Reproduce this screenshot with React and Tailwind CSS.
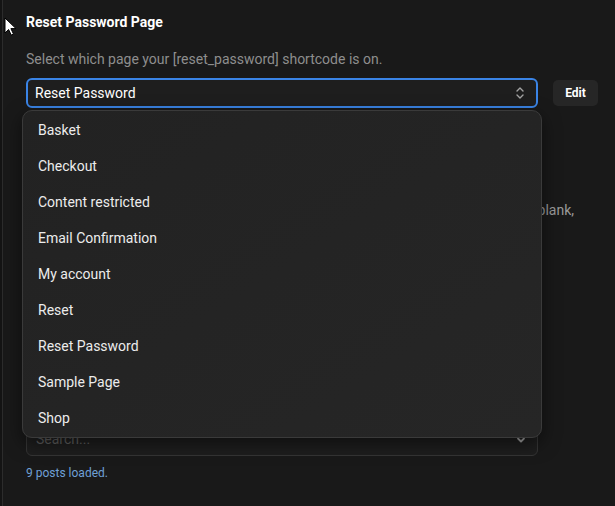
import React from "react";

const pages = [
  "Basket",
  "Checkout",
  "Content restricted",
  "Email Confirmation",
  "My account",
  "Reset",
  "Reset Password",
  "Sample Page",
  "Shop",
];

const font = { fontFamily: '"Segoe UI", Roboto, "Noto Sans", sans-serif' };

// up/down caret used by the native-looking select
const UpDown = () => (
  <svg width="10" height="14" viewBox="0 0 10 14" fill="none" stroke="#a3a3a3" strokeWidth="1.4" strokeLinecap="round" strokeLinejoin="round">
    <path d="M2 5l3-3 3 3" />
    <path d="M2 9l3 3 3-3" />
  </svg>
);

const ChevronDown = () => (
  <svg width="10" height="8" viewBox="0 0 10 8" fill="none" stroke="#a3a3a3" strokeWidth="1.8" strokeLinecap="round" strokeLinejoin="round">
    <path d="M2 2.5l3 3 3-3" />
  </svg>
);

const Pointer = () => (
  <svg width="12" height="19" viewBox="0 0 12 19">
    <path d="M1 1v15l3.6-3.5 2.6 5.6 2.3-1-2.6-5.5H12z" fill="#fff" stroke="#000" strokeWidth="1" strokeLinejoin="round" />
  </svg>
);

const App = () => {
  return (
    <div className="relative flex w-[615px] h-[506px] overflow-hidden bg-[#141414]" style={font}>
      <div className="w-[2px] shrink-0" />
      <div className="flex-1 border-l border-[#2c2c2c] bg-[#191919] pl-[23px] pr-[17px] pt-[12px]">
        <h2 className="text-[14px] leading-[20px] font-bold text-white">Reset Password Page</h2>
        <p className="mt-[17px] text-[14px] leading-[20px] text-[#8e8e8e]">
          Select which page your [reset_password] shortcode is on.
        </p>

        <div className="relative mt-[9px] flex items-center gap-[15px]">
          <div className="flex h-[30px] w-[512px] items-center justify-between rounded-[6px] border-2 border-[#3a84e6] bg-[#1e1e1e] pl-[7px] pr-[11px]">
            <span className="text-[14px] text-white">Reset Password</span>
            <UpDown />
          </div>
          <button className="h-[26px] w-[45px] rounded-[5px] bg-[#262626] text-[12px] font-bold text-white">
            Edit
          </button>

          {/* open option list */}
          <div className="absolute left-[-4px] top-[32px] z-10 w-[520px] rounded-[10px] border border-[#3a3a3a] bg-gradient-to-br from-[#222222] to-[#262626] py-[1px] shadow-[0_6px_18px_rgba(0,0,0,0.5)]">
            {pages.map((p) => (
              <div key={p} className="flex h-[36px] items-center pl-[15px] text-[14px] text-[#ececec]">
                {p}
              </div>
            ))}
          </div>
        </div>

        <h3 className="mt-[58px] text-[14px] leading-[20px] font-bold text-white">Redirect After Reset</h3>
        <p className="mt-[14px] w-[548px] text-right text-[14px] leading-[20px] text-[#9a9a9a]">
          Choose where users land after resetting, or leave blank,
        </p>
        <p className="text-[14px] leading-[20px] text-[#9a9a9a]">and they will be sent to the login page.</p>
        <div className="mt-[8px] h-[30px] w-[512px] rounded-[6px] border border-[#333] bg-[#1e1e1e]" />

        <h3 className="mt-[68px] text-[14px] leading-[20px] font-bold text-white">Page Search</h3>
        <p className="mt-[14px] text-[14px] leading-[20px] text-[#9a9a9a]">Search pages to narrow the list.</p>

        <div className="mt-[23px] flex h-[33px] w-[512px] items-center justify-between rounded-[6px] border border-[#353535] bg-[#1e1e1e] pl-[9px] pr-[11px]">
          <span className="text-[14px] text-[#5f5f5f]">Search...</span>
          <ChevronDown />
        </div>
        <p className="mt-[9px] text-[12px] leading-[16px] text-[#6fa0d6]">9 posts loaded.</p>
      </div>

      <div className="pointer-events-none absolute left-[4px] top-[17px] z-20">
        <Pointer />
      </div>
    </div>
  );
};

export default App;
